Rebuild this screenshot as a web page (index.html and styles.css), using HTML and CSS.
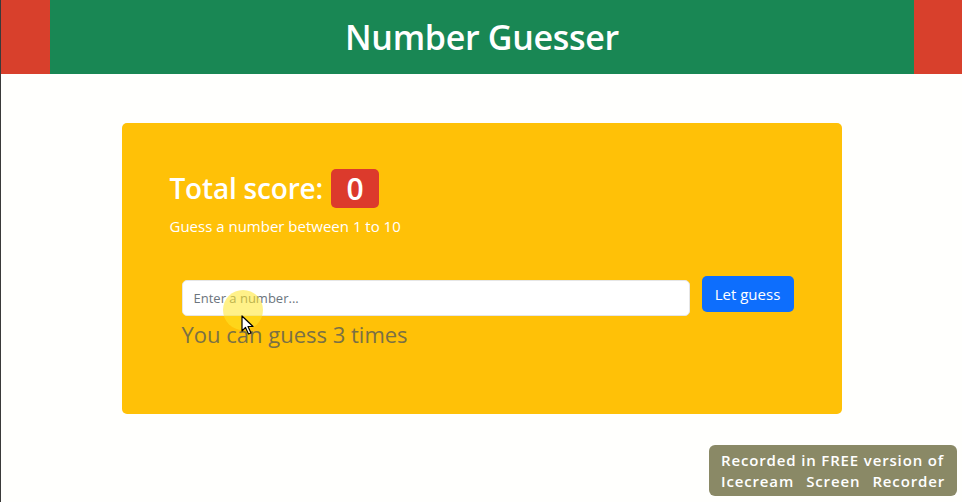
FILE: index.html
```html
<!DOCTYPE html>
<html lang="en">
<head>
<meta charset="utf-8">
<title>Number Guesser</title>
<link rel="stylesheet" href="styles.css">
</head>
<body>
<header class="topbar">
  <div class="topbar-inner">
    <h1 class="title">Number Guesser</h1>
  </div>
</header>
<main class="card">
  <h2 class="score">Total score: <span class="badge">0</span></h2>
  <p class="hint">Guess a number between 1 to 10</p>
  <div class="guess-row">
    <input class="guess-input" type="text" placeholder="Enter a number...">
    <button class="guess-btn" type="button">Let guess</button>
  </div>
  <p class="remaining">You can guess 3 times</p>
</main>
<div class="cursor-halo"></div>
<svg class="cursor" width="14" height="20" viewBox="0 0 14 20">
  <path d="M1 1 L1 16 L4.5 12.5 L7.5 19 L10 18 L7 11.5 L12 11.5 Z" fill="#fff" stroke="#000" stroke-width="1.2" stroke-linejoin="round"/>
</svg>
<div class="watermark">
  <p class="wm-line">Recorded in FREE version of</p>
  <p class="wm-line wm-justify"><span>Icecream</span> <span>Screen</span> <span>Recorder</span></p>
</div>
</body>
</html>
```

FILE: styles.css
```css
* { box-sizing: border-box; }
html, body { margin: 0; padding: 0; }
body {
  background: #fffffd;
  font-family: "Open Sans", "Noto Sans", sans-serif;
  width: 962px;
  height: 502px;
  overflow: hidden;
  position: relative;
  border-left: 1px solid #3a3a3a;
}
.topbar {
  background: #d8402c;
  height: 74px;
  padding: 0 48px 0 49px;
  display: flex;
}
.topbar-inner {
  background: #198754;
  flex: 1;
  display: flex;
  align-items: center;
  justify-content: center;
}
.title {
  margin: 0;
  color: #fff;
  font-size: 34px;
  font-weight: 600;
  letter-spacing: -0.3px;
  line-height: 1.2;
}
.card {
  width: 720px;
  margin: 49px auto 0;
  background: #ffc107;
  border-radius: 5px;
  height: 291px;
  padding: 46px 48px 0;
}
.score {
  margin: 0;
  color: #fff;
  font-size: 28px;
  font-weight: 600;
  line-height: 39px;
  display: flex;
  align-items: center;
  gap: 8px;
  letter-spacing: -0.2px;
}
.badge {
  display: inline-flex;
  align-items: center;
  justify-content: center;
  width: 48px;
  height: 39px;
  background: #dc3a2c;
  border-radius: 5px;
  font-size: 30px;
  font-weight: 600;
}
.hint {
  margin: 8px 0 0;
  color: #fff;
  font-size: 15px;
  line-height: 20px;
}
.guess-row {
  display: flex;
  align-items: flex-start;
  gap: 12px;
  margin: 40px 0 0 12px;
}
.guess-input {
  flex: 1;
  height: 36px;
  margin-top: 4px;
  border: 1px solid #e6e6e6;
  border-radius: 5px;
  padding: 0 11px;
  font-family: inherit;
  font-size: 13px;
  color: #212529;
  background: #fff;
  outline: none;
}
.guess-input::placeholder { color: #6c757d; }
.guess-btn {
  width: 92px;
  height: 36px;
  border: none;
  border-radius: 5px;
  background: #0d6efd;
  color: #fff;
  font-family: inherit;
  font-size: 15px;
  padding: 0;
  cursor: pointer;
}
.remaining {
  margin: 2px 0 0 12px;
  color: #7a7045;
  font-size: 22px;
  font-weight: 400;
  line-height: 32px;
}
.cursor-halo {
  position: absolute;
  left: 222px;
  top: 290px;
  width: 40px;
  height: 40px;
  border-radius: 50%;
  background: rgba(255, 230, 40, 0.55);
}
.cursor {
  position: absolute;
  left: 240px;
  top: 315px;
}
.watermark {
  position: absolute;
  left: 708px;
  top: 445px;
  width: 248px;
  height: 51px;
  background: #8a8966;
  border-radius: 6px;
  padding: 5px 12px 0;
  color: #fff;
  font-family: "Open Sans", sans-serif;
  font-weight: 600;
  font-size: 15px;
  letter-spacing: 0.85px;
}
.wm-line {
  margin: 0;
  line-height: 21px;
  white-space: nowrap;
}
.wm-justify {
  display: flex;
  justify-content: space-between;
}
```
